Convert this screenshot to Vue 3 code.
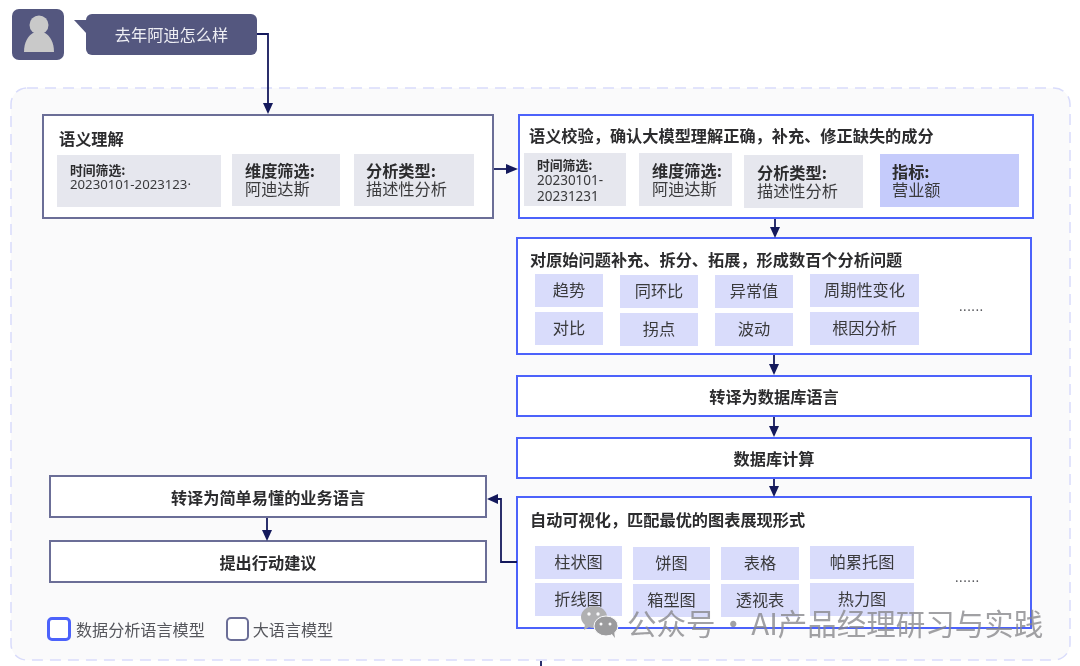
<script setup>
const timeChip = { label: '时间筛选:', value: '20230101-2023123·' }
const row1 = [
  { cls: 'q1', text: '趋势' }, { cls: 'q2 low', text: '同环比' }, { cls: 'q3 low', text: '异常值' }, { cls: 'q4', text: '周期性变化' },
  { cls: 'q1', text: '对比' }, { cls: 'q2 low', text: '拐点' }, { cls: 'q3 low', text: '波动' }, { cls: 'q4', text: '根因分析' }
]
const row2 = [
  { cls: 'v1', text: '柱状图' }, { cls: 'v2 low', text: '饼图' }, { cls: 'v3 low', text: '表格' }, { cls: 'v4', text: '帕累托图' },
  { cls: 'v1', text: '折线图' }, { cls: 'v2 low', text: '箱型图' }, { cls: 'v3 low', text: '透视表' }, { cls: 'v4', text: '热力图' }
]
</script>

<template>
  <div class="page">
    <header class="head">
      <div class="avatar">
        <svg viewBox="0 0 52 51" width="52" height="51">
          <circle cx="27" cy="16" r="9.500" fill="#c9c9c9" />
          <path d="M12 43 C12 33 16 27 21 24 H33 C38 27 42 33 42 43 Z" fill="#c9c9c9" />
        </svg>
      </div>
      <div class="bubble">去年阿迪怎么样</div>
    </header>

    <section class="panel">
      <svg class="panel-bg" viewBox="0 0 1061 574" width="1061" height="574">
        <rect x="1" y="1" width="1059" height="572" rx="16" fill="#fafafb" stroke="#d9dcfb" stroke-width="1.500" stroke-dasharray="11 7" />
      </svg>

      <div class="left">
        <div class="box grey understand">
          <h3 class="title">语义理解</h3>
          <div class="chips">
            <div class="chip c1">
              <b class="small">{{ timeChip.label }}</b>
              <span class="small num">{{ timeChip.value }}</span>
            </div>
            <div class="chip c2"><b>维度筛选:</b><span>阿迪达斯</span></div>
            <div class="chip c3"><b>分析类型:</b><span>描述性分析</span></div>
          </div>
        </div>
        <div class="box grey line first">转译为简单易懂的业务语言</div>
        <div class="box grey line second">提出行动建议</div>
        <div class="legend">
          <i class="swatch blue"></i><span>数据分析语言模型</span>
          <i class="swatch slate"></i><span>大语言模型</span>
        </div>
      </div>

      <div class="right">
        <div class="box blue check">
          <h3 class="title">语义校验，确认大模型理解正确，补充、修正缺失的成分</h3>
          <div class="chips">
            <div class="chip d1">
              <b class="small">时间筛选:</b>
              <span class="small num">20230101-<br />20231231</span>
            </div>
            <div class="chip d2"><b>维度筛选:</b><span>阿迪达斯</span></div>
            <div class="chip d3"><b>分析类型:</b><span>描述性分析</span></div>
            <div class="chip d4"><b>指标:</b><span>营业额</span></div>
          </div>
        </div>

        <div class="box blue expand">
          <h3 class="title">对原始问题补充、拆分、拓展，形成数百个分析问题</h3>
          <div class="tags qgrid">
            <div v-for="t in row1" :key="t.text" class="tag" :class="t.cls">{{ t.text }}</div>
          </div>
          <div class="dots q">......</div>
        </div>

        <div class="box blue line sql">转译为数据库语言</div>
        <div class="box blue line calc">数据库计算</div>

        <div class="box blue expand viz">
          <h3 class="title">自动可视化，匹配最优的图表展现形式</h3>
          <div class="tags vgrid">
            <div v-for="t in row2" :key="t.text" class="tag" :class="t.cls">{{ t.text }}</div>
          </div>
          <div class="dots v">......</div>
        </div>
      </div>
    </section>

    <svg class="links" viewBox="0 0 1080 666" width="1080" height="666" fill="none">
      <g stroke="#14195c" stroke-width="1.800">
        <path d="M257 34H268V104" />
        <path d="M494 169H508" />
        <path d="M775 219V229" />
        <path d="M774 355V366" />
        <path d="M774 417V428" />
        <path d="M774 479V488" />
        <path d="M267 518V532" />
        <path d="M517 562H501V499H496" />
        <path d="M541 661V666" />
      </g>
      <g fill="#14195c">
        <path d="M263 103H273L268 114Z" />
        <path d="M506 164L518 169L506 174Z" />
        <path d="M770 227H780L775 238Z" />
        <path d="M769 364H779L774 375Z" />
        <path d="M769 426H779L774 437Z" />
        <path d="M769 486H779L774 497Z" />
        <path d="M262 530H272L267 541Z" />
        <path d="M498 494V504L487 499Z" />
      </g>
    </svg>

    <div class="mark">
      <svg viewBox="0 0 40 34" width="40" height="34">
        <ellipse cx="14" cy="12" rx="13" ry="11" fill="#b0b0b2" />
        <path d="M5 19L4 25L11 21Z" fill="#b0b0b2" />
        <ellipse cx="26" cy="21" rx="12" ry="10" fill="#9b9b9d" stroke="#fafafc" stroke-width="1" />
        <path d="M31 28L35 33L34 26Z" fill="#9b9b9d" />
        <circle cx="9" cy="9" r="1.700" fill="#fafafc" />
        <circle cx="18" cy="9" r="1.700" fill="#fafafc" />
        <circle cx="21" cy="19" r="1.500" fill="#fafafc" />
        <circle cx="30" cy="19" r="1.500" fill="#fafafc" />
      </svg>
      <span>公众号 · AI产品经理研习与实践</span>
    </div>
  </div>
</template>

<style>
html, body { margin: 0; background: #fff; }
</style>

<style scoped>
.page {
  position: relative;
  width: 1080px;
  height: 666px;
  overflow: hidden;
  background: #fff;
  color: #2c2c2e;
  font-family: "Noto Sans CJK SC", "Noto Sans", sans-serif;
  filter: blur(.3px);
}
.head { display: flex; align-items: flex-start; padding: 9px 0 0 12px; height: 51px; }
.avatar {
  width: 52px; height: 51px; border-radius: 7px; background: #54577f; flex: none; overflow: hidden;
}
.avatar svg { display: block; }
.bubble {
  position: relative;
  box-sizing: border-box;
  margin: 5px 0 0 22px;
  width: 171px; height: 41px; border-radius: 6px; padding-bottom: 2px;
  background: #54577f; color: #eeeef4;
  display: flex; align-items: center; justify-content: center;
  font-size: 16.200px;
}
.bubble::before {
  content: "";
  position: absolute;
  left: -12px; top: 6px;
  width: 13px; height: 14px;
  background: #54577f;
  clip-path: polygon(0 0, 100% 0, 100% 100%);
}
.panel {
  position: relative;
  display: flex;
  width: 1061px; height: 574px;
  margin: 27px 0 0 10px;
}
.panel-bg { position: absolute; inset: 0; }
.left, .right { position: relative; padding-top: 27px; display: flex; flex-direction: column; align-items: flex-start; }
.left { margin-left: 32px; width: 452px; }
.right { margin-left: 22px; width: 518px; }
.box { box-sizing: border-box; background: #fff; border: 2px solid; }
.box.grey { border-color: #6b6e97; }
.box.blue { border-color: #4c62fb; }
.title { margin: 0; font-size: 16.200px; font-weight: 700; line-height: 22px; white-space: nowrap; color: #2c2c2e; }
.line { display: flex; align-items: center; justify-content: center; font-weight: 700; font-size: 16.200px; }
.understand { width: 452px; height: 105px; padding: 11px 0 0 15px; }
.understand .chips { display: flex; margin: 6px 0 0 -2px; }
.chip {
  box-sizing: border-box; display: flex; flex-direction: column; justify-content: center;
  background: #e6e7ee; line-height: 18px; font-size: 16.200px; color: #3a3a3c; height: 52px; padding-bottom: 2px;
}
.chip b { font-weight: 700; color: #2c2c2e; }
.chip .small { font-size: 12.800px; line-height: 14px; }
.chip .num { font-family: "Noto Sans", "Noto Sans CJK SC", sans-serif; font-size: 13.200px; }
.c1 { width: 164px; padding-left: 13px; padding-bottom: 8px; }
.c2 { width: 108px; margin-left: 11px; padding-left: 13px; margin-top: -1px; }
.c3 { width: 120px; margin-left: 14px; padding-left: 12px; margin-top: -1px; }
.first { width: 438px; height: 43px; margin: 256px 0 0 7px; }
.second { width: 438px; height: 43px; margin: 22px 0 0 7px; }
.legend { display: flex; align-items: center; margin: 34px 0 0 5px; font-size: 16.100px; color: #55565c; line-height: 24px; }
.swatch { box-sizing: border-box; display: block; width: 24px; height: 24px; border-radius: 5px; background: #fff; margin-right: 5px; }
.swatch.blue { border: 3px solid #4c62fb; }
.swatch.slate { border: 2px solid #6b6e97; margin-left: 21px; margin-right: 4px; width: 23px; }

.check { width: 516px; height: 105px; margin-left: 2px; padding: 8px 0 0 9px; }
.check .chips { display: flex; align-items: flex-start; margin: 7px 0 0 -5px; }
.d1 { width: 102px; padding-left: 13px; height: 53px; padding-bottom: 0; padding-top: 2px; }
.d2 { width: 93px; margin-left: 13px; padding-left: 13px; height: 53px; }
.d3 { width: 119px; margin-left: 12px; padding-left: 13px; margin-top: 2px; height: 53px; }
.d4 { width: 139px; margin-left: 17px; padding-left: 12px; margin-top: 1px; height: 53px; background: #c5cbfb; }
.d1 .num { font-size: 13.500px; line-height: 16px; }

.expand { position: relative; width: 516px; height: 118px; margin-top: 18px; padding: 9px 0 0 12px; }
.tags { display: grid; font-size: 16.200px; color: #3a3a3c; }
.tag { box-sizing: border-box; display: flex; align-items: center; justify-content: center; background: #d9dcfb; height: 33px; padding-bottom: 3px; }
.low { position: relative; top: 1px; }
.qgrid { margin: 4px 0 0 5px; grid-template-columns: 68px 78px 78px 109px; column-gap: 17px; row-gap: 5px; }
.vgrid { margin: 16px 0 0 5px; grid-template-columns: 87px 77px 78px 104px; column-gap: 11px; row-gap: 4px; }
.dots { position: absolute; font-size: 13px; letter-spacing: .5px; color: #44454a; line-height: 14px; }
.dots.q { left: 441px; top: 60px; }
.dots.v { left: 437px; top: 72px; }
.sql { width: 516px; height: 42px; margin-top: 20px; }
.calc { width: 516px; height: 42px; margin-top: 20px; }
.viz { height: 133px; margin-top: 17px; padding-top: 10px; }

.links { position: absolute; left: 0; top: 0; pointer-events: none; }
.mark {
  position: absolute; left: 580px; top: 603px;
  display: flex; align-items: center; gap: 7px;
  font-size: 29.500px; line-height: 38px; word-spacing: -3.500px; color: rgba(135,135,138,.78); white-space: nowrap;
}
</style>
